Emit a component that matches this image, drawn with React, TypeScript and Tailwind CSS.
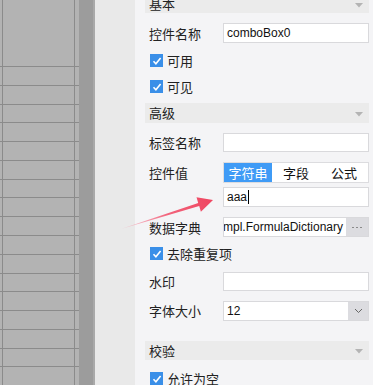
const cjk = { fontFamily: '"Noto Sans CJK SC", "Liberation Sans", sans-serif' };
const latin = { fontFamily: '"Liberation Sans", "Noto Sans CJK SC", sans-serif' };

function Section({ title, className }: { title: string; className?: string }) {
  return (
    <div className={`flex h-[20px] items-center justify-between bg-[#ebebeb] pl-[4px] pr-[6px] ${className ?? ''}`}>
      <span className="text-[13px] leading-none text-[#222]" style={cjk}>{title}</span>
      <svg width="8" height="5" viewBox="0 0 8 5" className="mt-[3px]">
        <path d="M0 0h8L4 4.5z" fill="#b4b4b4" />
      </svg>
    </div>
  );
}

function Check({ label, className }: { label: string; className?: string }) {
  return (
    <div className={`flex h-[13px] items-center pl-[5px] ${className ?? ''}`}>
      <span className="flex h-[13px] w-[13px] items-center justify-center bg-[#3a8fe8]">
        <svg width="10" height="10" viewBox="0 0 10 10">
          <path d="M1.5 5.2l2.4 2.5L8.6 2" fill="none" stroke="white" strokeWidth="1.6" />
        </svg>
      </span>
      <span className="ml-[4px] text-[13px] leading-none text-[#222]" style={cjk}>{label}</span>
    </div>
  );
}

function Row({ label, className, children }: { label?: string; className?: string; children: React.ReactNode }) {
  return (
    <div className={`flex min-w-0 items-center ${className ?? ''}`}>
      <div className="w-[78px] shrink-0 pl-[4px] text-[13px] leading-none text-[#222]" style={cjk}>{label}</div>
      <div className="min-w-0 flex-1 self-stretch">{children}</div>
    </div>
  );
}

function Field({ value }: { value?: string }) {
  return (
    <div className="flex h-full items-center border border-[#d9d9dc] bg-white pl-[3px] text-[12px] text-[#111]" style={latin}>
      {value}
    </div>
  );
}

function GridRow({ top, h }: { top?: boolean; h: string }) {
  return (
    <div className={`flex ${h} ${top ? '' : 'border-t border-[#8b8b8b]'}`}>
      <div className="w-[2px]" />
      <div className="w-[73px] border-x border-[#8b8b8b]" />
      <div className="w-[3px]" />
    </div>
  );
}

export default function App() {
  return (
    <div className="relative flex h-[385px] w-[373px] overflow-hidden bg-[#f4f4f6]">
      {/* sheet grid */}
      <div className="flex w-[79px] shrink-0 flex-col bg-[#b3b3b3]">
        <GridRow top h="h-[67px]" />
        {Array.from({ length: 17 }).map((_, i) => (
          <GridRow key={i} h="h-[19px]" />
        ))}
      </div>
      <div className="w-[14px] shrink-0 bg-[#9c9c9c]" />
      <div className="w-[2px] shrink-0 bg-[#a9a9a9]" />
      <div className="w-[40px] shrink-0 bg-[#e9e9e9]" />

      {/* property panel */}
      <div className="flex min-w-0 flex-1 flex-col pl-[10px] pr-[4px]">
        <Section title="基本" className="-mt-[6px]" />
        <Row label="控件名称" className="mt-[10px] h-[20px]">
          <Field value="comboBox0" />
        </Row>
        <Check label="可用" className="mt-[11px]" />
        <Check label="可见" className="mt-[13px]" />
        <Section title="高级" className="mt-[10px]" />
        <Row label="标签名称" className="mt-[10px] h-[20px]">
          <Field />
        </Row>
        <Row label="控件值" className="mt-[10px] h-[22px]">
          <div className="flex h-full border border-[#dcdcdf] bg-white text-[13px]" style={cjk}>
            <div className="flex flex-1 items-center justify-center bg-[#3f9bf6] text-white">字符串</div>
            <div className="flex flex-1 items-center justify-center text-[#111]">字段</div>
            <div className="flex flex-1 items-center justify-center text-[#111]">公式</div>
          </div>
        </Row>
        <Row className="mt-[4px] h-[21px]">
          <div className="flex h-full items-center border border-[#d9d9dc] bg-white pl-[3px] text-[12px] text-[#111]" style={latin}>
            aaa
            <span className="ml-[1px] h-[14px] w-[1px] bg-black" />
          </div>
        </Row>
        <Row label="数据字典" className="mt-[10px] h-[20px]">
          <div className="flex h-full border border-[#d9d9dc] bg-white">
            <div className="flex min-w-0 flex-1 items-center justify-end overflow-hidden whitespace-nowrap pr-[3px] text-[12px] text-[#111]" style={latin}>
              com.fr.data.impl.FormulaDictionary
            </div>
            <div className="flex w-[22px] shrink-0 items-center justify-center gap-[2px] bg-[#dcdce0]">
              <span className="h-[1px] w-[2px] bg-[#8a8a8a]" />
              <span className="h-[1px] w-[2px] bg-[#8a8a8a]" />
              <span className="h-[1px] w-[2px] bg-[#8a8a8a]" />
            </div>
          </div>
        </Row>
        <Check label="去除重复项" className="mt-[10px]" />
        <Row label="水印" className="mt-[12px] h-[19px]">
          <Field />
        </Row>
        <Row label="字体大小" className="mt-[10px] h-[20px]">
          <div className="flex h-full border border-[#d9d9dc] bg-white">
            <div className="flex flex-1 items-center pl-[3px] text-[12px] text-[#111]" style={latin}>12</div>
            <div className="flex w-[20px] items-center justify-center bg-[#dcdce0]">
              <svg width="9" height="6" viewBox="0 0 9 6">
                <path d="M1 1l3.5 3.5L8 1" fill="none" stroke="#666" strokeWidth="1" />
              </svg>
            </div>
          </div>
        </Row>
        <Section title="校验" className="mt-[20px]" />
        <Check label="允许为空" className="mt-[12px]" />
      </div>

      {/* annotation arrow */}
      <svg className="pointer-events-none absolute inset-0" width="373" height="385" viewBox="0 0 373 385">
        <defs>
          <linearGradient id="arr" x1="121" y1="229" x2="213" y2="200" gradientUnits="userSpaceOnUse">
            <stop offset="0" stopColor="#f7a3b4" stopOpacity="0.5" />
            <stop offset="0.5" stopColor="#f2647c" />
            <stop offset="1" stopColor="#ef4560" />
          </linearGradient>
        </defs>
        <polygon
          points="121,229 198.2,203 196.5,197.3 213,200 200.9,211.7 199.2,206 "
          fill="url(#arr)"
        />
      </svg>
    </div>
  );
}
